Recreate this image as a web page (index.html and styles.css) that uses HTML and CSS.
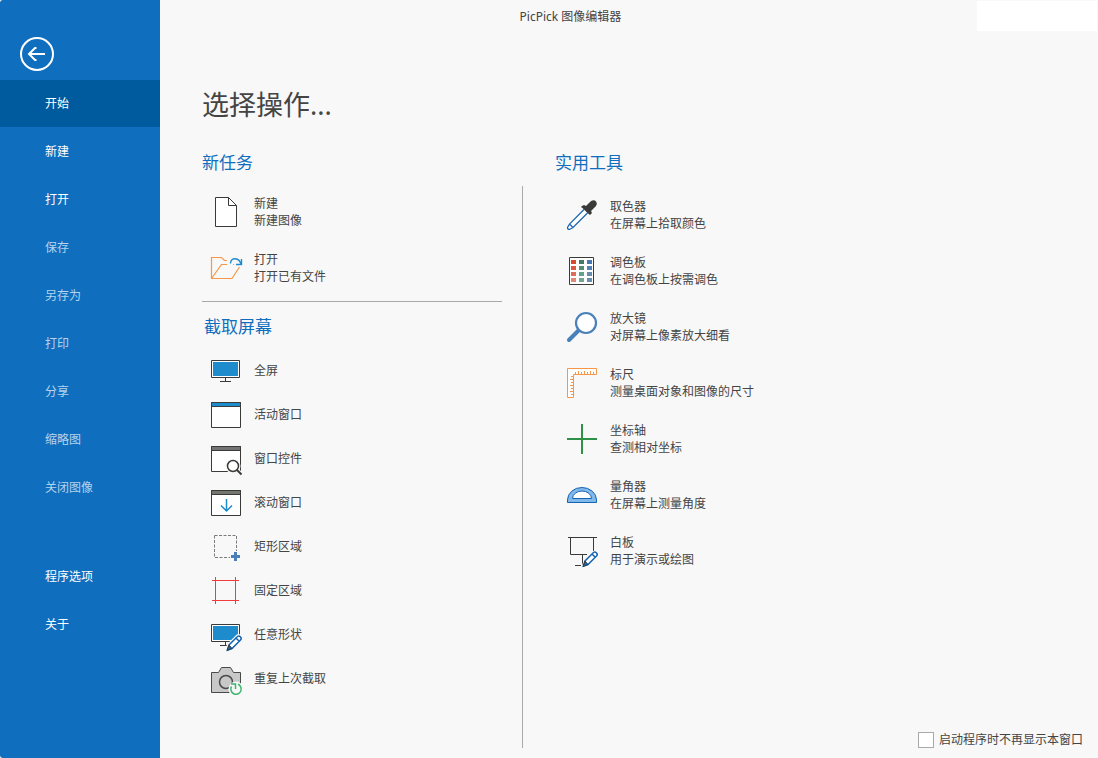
FILE: index.html
```html
<!DOCTYPE html>
<html lang="zh-CN">
<head>
<meta charset="utf-8">
<title>PicPick 图像编辑器</title>
<link rel="stylesheet" href="styles.css">
</head>
<body>
<div class="app">
  <aside class="sidebar">
    <button class="back" type="button" aria-label="返回">
      <svg class="back-icon" viewBox="0 0 36 36" fill="none" stroke="#fff" stroke-width="2"><circle cx="18" cy="18" r="16"/><path d="M10 18H26M17.500 12H16L10 18L16 24H17.500"/></svg>
    </button>
    <nav class="menu">
      <button class="menu-item active" type="button">开始</button>
      <button class="menu-item" type="button">新建</button>
      <button class="menu-item" type="button">打开</button>
      <button class="menu-item" type="button" disabled>保存</button>
      <button class="menu-item" type="button" disabled>另存为</button>
      <button class="menu-item" type="button" disabled>打印</button>
      <button class="menu-item" type="button" disabled>分享</button>
      <button class="menu-item" type="button" disabled>缩略图</button>
      <button class="menu-item" type="button" disabled>关闭图像</button>
    </nav>
    <nav class="menu">
      <button class="menu-item" type="button">程序选项</button>
      <button class="menu-item" type="button">关于</button>
    </nav>
  </aside>
  <div class="page">
    <header class="titlebar">
      <div class="window-title">PicPick 图像编辑器</div>
      <div class="window-controls"></div>
    </header>
    <main class="content">
      <h1 class="heading">选择操作...</h1>
      <div class="columns">
        <h2 class="section-title">新任务</h2>
        <h2 class="section-title tools-title">实用工具</h2>
        <div class="left">
          <section class="tasks">
            <button class="row" type="button">
              <svg class="icon" viewBox="0 0 32 32" fill="none" stroke="#3a3a38"><path fill="#fff" d="M5.500 1.500H18.500L26.500 9.500V30.500H5.500Z"/><path d="M18.500 1.500V9.500H26.500"/></svg>
              <span class="label">新建<br>新建图像</span>
            </button>
            <button class="row" type="button">
              <svg class="icon" viewBox="0 0 32 32" fill="none" stroke="#f79646" stroke-width="1.200"><path d="M17 8.500H14.500L11.500 5.500H1.500V26.500H22L29.500 15M1.500 26.500L11.500 12.500H17M23 12.500H24"/><path stroke="#1e8bcd" stroke-width="1.400" d="M20.500 11.500C20.500 5 29.500 5 31 12.500M26 12.500H31.500V7"/></svg>
              <span class="label">打开<br>打开已有文件</span>
            </button>
          </section>
          <section class="captures">
            <h2 class="section-title capture-title">截取屏幕</h2>
            <button class="row short" type="button">
              <svg class="icon" viewBox="0 0 32 32" fill="none" stroke="#3a3a38"><path fill="#fff" d="M1.500 6.500H29.500V23.500H1.500Z"/><path fill="#1e8bcd" stroke="none" d="M3 8H28V22H3Z"/><path d="M15.500 24V27.500M10 27.500H21"/></svg>
              <span class="label">全屏</span>
            </button>
            <button class="row short" type="button">
              <svg class="icon" viewBox="0 0 32 32" fill="#fff" stroke="#3a3a38"><path d="M1.500 4.500H30.500V29.500H1.500Z"/><path fill="#1e8bcd" d="M1.500 4.500H30.500V8.500H1.500Z"/></svg>
              <span class="label">活动窗口</span>
            </button>
            <button class="row short" type="button">
              <svg class="icon" viewBox="0 0 32 32" fill="#fff" stroke="#3a3a38"><path d="M1.500 4.500H30.500V29.500H1.500Z"/><path fill="#737373" d="M1.500 4.500H30.500V8.500H1.500Z"/><circle cx="23" cy="24" r="7.500" fill="#f8f8f8" stroke="none"/><path stroke="#f8f8f8" stroke-width="4" d="M27 28L32 33"/><circle cx="23" cy="24" r="5.500" stroke-width="1.500"/><path stroke-width="2" d="M27 28L31.500 32.500"/></svg>
              <span class="label">窗口控件</span>
            </button>
            <button class="row short" type="button">
              <svg class="icon" viewBox="0 0 32 32" fill="#fff" stroke="#3a3a38"><path d="M1.500 4.500H30.500V29.500H1.500Z"/><path fill="#73766f" d="M1.500 4.500H30.500V8.500H1.500Z"/><path fill="none" stroke="#1e8bcd" stroke-width="1.500" d="M16.500 13V25M11 19.500L16.500 25L22 19.500"/></svg>
              <span class="label">滚动窗口</span>
            </button>
            <button class="row short" type="button">
              <svg class="icon" viewBox="0 0 32 32" fill="none" stroke="#7a7a7a"><path stroke-dasharray="3 1.500" d="M4.500 5.500H26.500V21M4.500 5.500V27.500H20"/><path stroke="#4a7fb9" stroke-width="3" d="M21 26.500H30M25.500 22V31"/></svg>
              <span class="label">矩形区域</span>
            </button>
            <button class="row short" type="button">
              <svg class="icon" viewBox="0 0 32 32" fill="none" stroke="#f03c3c"><path d="M5.500 3V30M25.500 3V30M2 6.500H29M2 26.500H29"/></svg>
              <span class="label">固定区域</span>
            </button>
            <button class="row short" type="button">
              <svg class="icon" viewBox="0 0 32 32" fill="none" stroke="#3a3a38"><path fill="#fff" d="M1.500 6.500H29.500V23.500H1.500Z"/><path fill="#1e8bcd" stroke="none" d="M3 8H28V22H3Z"/><path d="M15.500 24V27.500M10 27.500H17"/><path fill="#f8f8f8" stroke="#f8f8f8" stroke-width="4" d="M17.500 32L19 27L27.500 18.500Q29 17.500 30.500 19Q32 20.500 30.500 22L22 30.500Z"/><path fill="#fff" stroke="#1464b4" stroke-width="1.500" d="M17.500 32L19 27L27.500 18.500Q29 17.500 30.500 19Q32 20.500 30.500 22L22 30.500ZM26 20L29 23"/><path fill="#1464b4" d="M17 32.500L19 27L22 30.500Z"/></svg>
              <span class="label">任意形状</span>
            </button>
            <button class="row short" type="button">
              <svg class="icon" viewBox="0 0 32 32" fill="#c8c8c8" stroke="#4a4a4a"><path d="M1.500 10.500H8.500L11.500 5.500H20.500L23.500 10.500H30.500V30.500H1.500Z"/><circle cx="16" cy="20" r="6.500" stroke-width="1.500"/><circle cx="26" cy="27" r="7.500" fill="#f8f8f8" stroke="none"/><path fill="none" stroke="#3cb46e" stroke-width="1.500" d="M28 22.300A5.200 5.200 0 1 1 21.500 24.500M21 22H25.500V27"/></svg>
              <span class="label">重复上次截取</span>
            </button>
          </section>
        </div>
        <div class="right">
          <section class="tools">
            <button class="row" type="button">
              <svg class="icon" viewBox="0 0 32 32" fill="none"><path fill="#fff" stroke="#1464b4" stroke-width="1.200" d="M18 11.500L3.500 26L1.500 29.500Q1.500 31.500 3.500 31.500L7 29.500L21.500 15M4 26.500L6.500 29"/><path fill="#3a3a38" d="M16 8L18 7L20 8L24 4Q26 1.500 29 2.500Q32 5 30 8L25 13L26 15L24 17L21.500 15L17 10.500L15 9Z"/></svg>
              <span class="label">取色器<br>在屏幕上拾取颜色</span>
            </button>
            <button class="row" type="button">
              <svg class="icon" viewBox="0 0 32 32"><path fill="#fff" stroke="#3a3a38" d="M3.500 3.500H27.500V30.500H3.500Z"/><path fill="#d74b2d" d="M5 6H10V10H5Z"/><path fill="#d85a42" d="M5 12H10V16H5Z"/><path fill="#dc6e5a" d="M5 18H10V22H5Z"/><path fill="#e08778" d="M5 24H10V28H5Z"/><path fill="#467864" d="M13 6H18V10H13Z"/><path fill="#558c78" d="M13 12H18V16H13Z"/><path fill="#64a08c" d="M13 18H18V22H13Z"/><path fill="#73a596" d="M13 24H18V28H13Z"/><path fill="#4678b4" d="M21 6H26V10H21Z"/><path fill="#5082b9" d="M21 12H26V16H21Z"/><path fill="#698caf" d="M21 18H26V22H21ZM21 24H26V28H21Z"/></svg>
              <span class="label">调色板<br>在调色板上按需调色</span>
            </button>
            <button class="row" type="button">
              <svg class="icon" viewBox="0 0 32 32" stroke="#4a80b9"><path stroke-width="4" stroke-linecap="round" d="M12.500 20.500L3 30"/><circle cx="20" cy="13" r="10" fill="#fff" stroke-width="2.200"/></svg>
              <span class="label">放大镜<br>对屏幕上像素放大细看</span>
            </button>
            <button class="row" type="button">
              <svg class="icon" viewBox="0 0 32 32" fill="none" stroke="#f79646"><path fill="#fff" d="M1.500 2.500H30.500V8.500H7.500V31.500H1.500Z"/><path d="M9.500 6V8M12.500 5V8M15.500 6V8M18.500 5V8M21.500 6V8M24.500 5V8M27.500 6V8M5 10.500H7M4 13.500H7M5 16.500H7M4 19.500H7M5 22.500H7M4 25.500H7M5 28.500H7"/></svg>
              <span class="label">标尺<br>测量桌面对象和图像的尺寸</span>
            </button>
            <button class="row" type="button">
              <svg class="icon" viewBox="0 0 32 32" stroke="#2d9146" stroke-width="2"><path d="M1 17H31M16 2V32"/></svg>
              <span class="label">坐标轴<br>查测相对坐标</span>
            </button>
            <button class="row" type="button">
              <svg class="icon" viewBox="0 0 32 32" stroke="#1464b4"><path fill="#82b9eb" d="M1.500 24.500V22A14.500 12.500 0 0 1 30.500 22V24.500Z"/><path fill="#fff" d="M6.500 20.500A9.500 7.500 0 0 1 25.500 20.500Z"/></svg>
              <span class="label">量角器<br>在屏幕上测量角度</span>
            </button>
            <button class="row" type="button">
              <svg class="icon" viewBox="0 0 32 32" fill="none" stroke="#3a3a38"><path d="M2 3.500H31M4.500 4V20.500H21M27.500 4V17M16.500 21V31M9 31.500H15"/><path fill="#f8f8f8" stroke="#f8f8f8" stroke-width="3" d="M17.500 32L19 27L27.500 18.500Q29 17.500 30.500 19Q32 20.500 30.500 22L22 30.500Z"/><path fill="#fff" stroke="#1464b4" stroke-width="1.500" d="M17.500 32L19 27L27.500 18.500Q29 17.500 30.500 19Q32 20.500 30.500 22L22 30.500ZM26 20L29 23"/><path fill="#1464b4" d="M17 32.500L19 27L22 30.500Z"/></svg>
              <span class="label">白板<br>用于演示或绘图</span>
            </button>
          </section>
          <label class="startup"><input class="check" type="checkbox">启动程序时不再显示本窗口</label>
        </div>
      </div>
    </main>
  </div>
</div>
</body>
</html>
```
FILE: styles.css
```css
* {
  box-sizing: border-box;
}

body {
  margin: 0;
  background: #f8f8f8;
  color: #444;
  font-family: "Noto Sans", "Noto Sans CJK SC", sans-serif;
  font-size: 12px;
  line-height: 17px;
}

button {
  border: 0;
  padding: 0;
  background: none;
  color: inherit;
  font: inherit;
  text-align: left;
}

.app {
  display: flex;
  min-height: 100vh;
}

.sidebar {
  display: flex;
  flex: 0 0 160px;
  flex-direction: column;
  padding-top: 36px;
  border-radius: 3px 0 0 3px;
  background: #106ebe;
  color: #fff;
}

.back {
  align-self: flex-start;
  height: 36px;
  margin: 0 0 8px 19px;
}

.back-icon {
  display: block;
  width: 36px;
  height: 36px;
}

.menu {
  display: flex;
  flex-direction: column;
  gap: 1px;
  margin-bottom: 42px;
}

.menu-item {
  height: 47px;
  padding-left: 45px;
}

.menu-item.active {
  background: #005a9e;
}

.menu-item:disabled {
  color: #b4d3ec;
}

.page {
  display: flex;
  flex: 1;
  flex-direction: column;
}

.titlebar {
  display: flex;
  padding: 1px 1px 0 4px;
}

.window-title {
  flex: 1;
  padding-top: 7px;
  text-align: center;
}

.window-controls {
  width: 120px;
  height: 30px;
  background: #fff;
}

.content {
  display: flex;
  flex: 1;
  flex-direction: column;
  padding: 53px 15px 10px 42px;
}

.heading {
  margin: 0;
  font-size: 27px;
  font-weight: 400;
  line-height: 42px;
}

.columns {
  display: grid;
  flex: 1;
  grid-template-columns: 321px 1fr;
  grid-template-rows: 60px 1fr;
}

.section-title {
  margin: 0;
  padding-top: 25px;
  color: #106ebe;
  font-size: 17px;
  font-weight: 400;
  line-height: 24px;
}

.tools-title {
  padding-left: 32px;
}

.left {
  padding-right: 20px;
  border-right: 1px solid #a9a9a9;
}

.tasks {
  display: flex;
  flex-direction: column;
  gap: 4px;
  padding-bottom: 7px;
  border-bottom: 1px solid #a9a9a9;
}

.capture-title {
  padding: 13px 0 9px 2px;
}

.row {
  display: flex;
  align-items: center;
  gap: 12px;
  width: 100%;
  height: 56px;
  padding-left: 8px;
}

.tasks .row {
  height: 52px;
}

.row.short {
  height: 44px;
}

.tools .label {
  padding-top: 2px;
}

.icon {
  flex: none;
  width: 32px;
  height: 32px;
  overflow: visible;
}

.right {
  display: flex;
  flex-direction: column;
  justify-content: space-between;
  padding-left: 35px;
}

.startup {
  display: flex;
  align-items: center;
  align-self: flex-end;
  gap: 5px;
}

.check {
  width: 16px;
  height: 16px;
  margin: 0;
  border: 1px solid #a9a9a9;
  background: #fff;
  appearance: none;
}

.check:checked {
  background: #106ebe;
}
```
